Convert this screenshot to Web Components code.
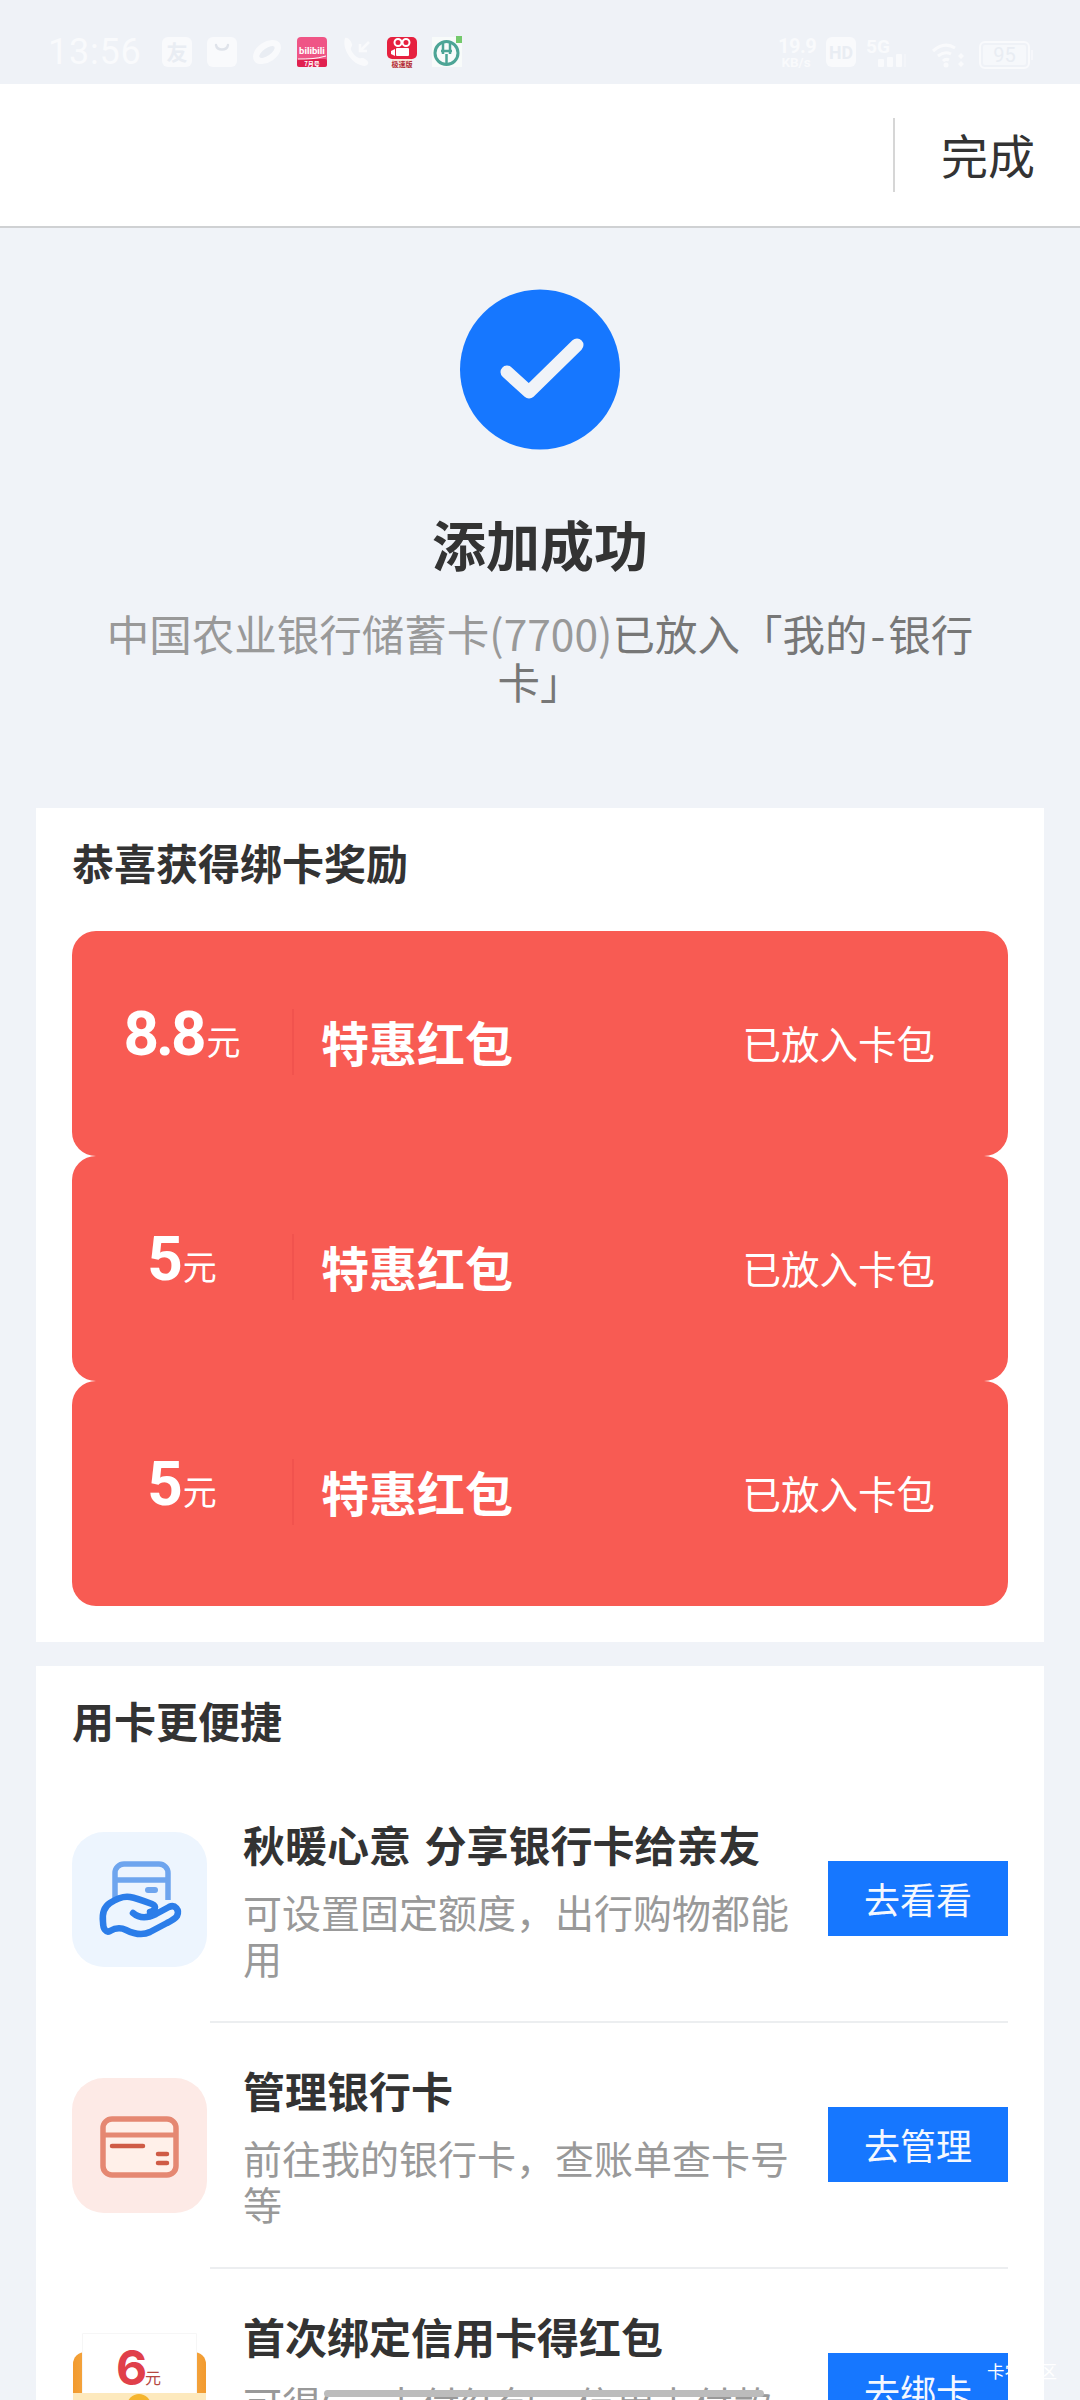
<!DOCTYPE html>
<html><head><meta charset="utf-8">
<style>
html,body{margin:0;padding:0}
body{width:1080px;height:2400px;overflow:hidden;background:#f0f3f8;font-family:"Noto Sans CJK SC","Noto Sans",sans-serif;color:#333}
</style></head><body>
<app-page></app-page>
<script>
function def(name,css,html){
  customElements.define(name,class extends HTMLElement{
    constructor(){super();const r=this.attachShadow({mode:'open'});r.innerHTML='<style>'+css+'</style>'+(typeof html==='function'?html(this):html);}
  });
}
def('status-bar',`:host{display:flex;height:84px;box-sizing:border-box;background:#eff2f7;align-items:center;padding:20px 47px 0 48px;color:#f9fafc;font-family:Roboto,sans-serif}
.t{font-size:36px;width:92px;letter-spacing:.8px;margin-right:22px;line-height:1;white-space:nowrap}
.ic{display:flex;gap:15px;align-items:center;height:32px}
.ic svg{display:block;width:30px;height:32px}
.r{margin-left:auto;display:flex;align-items:center;height:32px}
.r svg{display:block;flex:none}
.sp{font-size:13.500px;line-height:13px;font-weight:700;text-align:center;width:36px;margin-right:12px;white-space:nowrap}
.sp b{font-size:20px;line-height:20px;display:block;font-weight:700;letter-spacing:-.5px}
`,`<span class="t">13:56</span><div class="ic">
<svg viewBox="0 0 30 32"><rect x="0" y="1" width="30" height="30" rx="6" fill="#f9fafc"/><text x="15" y="24" text-anchor="middle" font-size="21" font-weight="700" font-family="Noto Sans CJK SC" fill="#e9edf3">友</text></svg>
<svg viewBox="0 0 30 32"><rect x="0" y="1" width="30" height="30" rx="6" fill="#f9fafc"/><path d="M9 9c1 6 11 6 12 0" stroke="#dfe3ea" stroke-width="2.4" fill="none" stroke-linecap="round"/></svg>
<svg viewBox="0 0 30 32"><g transform="rotate(-35 15 16)"><ellipse cx="15" cy="16" rx="15.5" ry="10" fill="#f9fafc"/><ellipse cx="15" cy="16" rx="9" ry="3.600" fill="#e9edf3"/></g></svg>
<svg viewBox="0 0 30 32"><rect y="1" width="30" height="30" rx="4" fill="#ef5586"/><rect y="23" width="30" height="8" rx="2" fill="#e0204f"/><path d="M1 23c10 0 18 0 28-3" stroke="#fff" stroke-width="1" fill="none"/><text x="15" y="18" text-anchor="middle" font-size="9.500" font-weight="700" font-family="Roboto" fill="#fff">bilibili</text><text x="15" y="30" text-anchor="middle" font-size="6" font-weight="700" font-family="Noto Sans CJK SC" fill="#fff">7&#x6708;&#x53f7;</text></svg>
<svg viewBox="0 0 30 32"><path d="M3 2c3-1 6 3 7 6 1 2-2 3-1 6 2 4 5 7 8 8 2 1 4-1 6 1 2 1 4 3 3 5-2 3-6 2-10 0C8 24 0 12 3 2z" fill="#f9fafc"/><path d="M27 6L19 14M18 8v7h7" stroke="#f9fafc" stroke-width="2.500" fill="none"/></svg>
<svg viewBox="0 0 30 32"><rect y="1" width="30" height="22" rx="5" fill="#e6213f"/><rect x="5" y="23" width="20" height="9" fill="#f8e6d8"/><circle cx="11" cy="6.500" r="3.500" fill="none" stroke="#fff" stroke-width="2"/><circle cx="19" cy="6.500" r="3.500" fill="none" stroke="#fff" stroke-width="2"/><rect x="9" y="12" width="13" height="8" rx="1" fill="#fff"/><path d="M8 13l-4 2v3l4 2z" fill="#fff"/><text x="15" y="31" text-anchor="middle" font-size="7" font-weight="700" font-family="Noto Sans CJK SC" fill="#b02a3a">&#x6781;&#x901f;&#x7248;</text></svg>
<svg viewBox="0 0 30 32"><rect y="1" width="30" height="30" fill="#f8fbfa"/><circle cx="14.500" cy="17" r="11.500" fill="none" stroke="#4da596" stroke-width="3"/><path d="M11 6v12M18 6v12M9 15h11M14.500 18v11" stroke="#4da596" stroke-width="2.500"/><path d="M24 0h6v7h-6z" fill="#74c96c"/></svg>
</div><div class="r">
<div class="sp"><b>19.9</b>KB/s</div>
<svg width="30" height="32" viewBox="0 0 30 32"><rect y="1" width="30" height="30" rx="6" fill="#f9fafc"/><text x="15" y="23" text-anchor="middle" font-size="19" font-weight="700" font-family="Roboto" fill="#e9edf3" textLength="24" lengthAdjust="spacingAndGlyphs">HD</text></svg>
<svg width="40" height="32" viewBox="0 0 40 32" style="margin-left:10px"><g fill="#f9fafc"><rect x="12" y="23" width="6" height="8" rx="1"/><rect x="21" y="21" width="6" height="10" rx="1"/><rect x="30" y="18" width="6" height="13" rx="1"/><rect x="38" y="18" width="2" height="13" opacity=".4"/></g><text x="0" y="17" font-size="19" font-weight="700" font-family="Roboto" fill="#f9fafc" textLength="24" lengthAdjust="spacingAndGlyphs">5G</text></svg>
<svg width="33" height="26" viewBox="0 0 33 26" style="margin:6px 14px 0 26px"><path d="M1 9c8-7 16-7 22-3M6 14c5-4 9-4 13-2M11 19c2-2 4-2 6-1" fill="none" stroke="#f9fafc" stroke-width="3"/><circle cx="14" cy="23" r="2.500" fill="#f9fafc"/><path d="M29 11l3 3-3 3-3-3zM29 19l3 3-3 3-3-3z" fill="#f9fafc"/></svg>
<svg width="54" height="28" viewBox="0 0 54 28" style="margin-top:6px"><rect x="1" y="1" width="49" height="26" rx="5" fill="none" stroke="#f9fafc" stroke-width="2"/><rect x="4" y="4" width="43" height="20" rx="2" fill="#f6f8fb"/><rect x="52" y="9" width="2" height="10" fill="#f9fafc" opacity=".7"/><text x="25.500" y="21" text-anchor="middle" font-size="20" font-family="Roboto" fill="#e9edf3">95</text></svg>
</div>`);
def('nav-bar',`:host{display:flex;height:144px;box-sizing:border-box;background:#fff;border-bottom:2px solid #cfd1d3;justify-content:flex-end;align-items:center}
.d{width:2px;height:74px;background:#d6d6d6;margin-right:46px;margin-top:-1px}
.t{font-size:47px;line-height:60px;color:#333;margin-right:45px;font-weight:400;margin-top:-2px}`,
`<span class="d"></span><span class="t">完成</span>`);
def('success-head',`:host{display:flex;flex-direction:column;align-items:center;padding:61px 0 0;height:580px;box-sizing:border-box}
svg{display:block;width:160px;height:161px}
h1{margin:63px 0 0;font-size:54px;line-height:62px;font-weight:700;color:#333}
p{margin:34px 0 0;width:880px;text-align:center;font-size:42.500px;line-height:48px;color:#777}
span{color:#999}
i{font-style:normal;margin:0 3px}`,
`<svg viewBox="0 0 160 161"><circle cx="80" cy="80.500" r="80" fill="#1677ff"/><path d="M47 83L69 103 117 56" fill="none" stroke="#f0f3f8" stroke-width="13" stroke-linecap="round" stroke-linejoin="round"/></svg>
<h1>添加成功</h1><p><span>中国农业银行储蓄卡(7700)</span>已放入「我的<i>-</i>银行卡」</p>`);
def('white-card',`:host{display:block;background:#fff;margin:0 36px 24px;padding:26px 36px 36px}
h2{margin:0;font-size:42px;line-height:56px;font-weight:700;color:#333}
.b{display:flex;flex-direction:column}`,
`<h2><slot name="title"></slot></h2><div class="b"><slot></slot></div>`);
def('red-ticket',`:host{display:flex;height:225px;box-sizing:border-box;background:#f85b53;border-radius:24px;color:#fff;align-items:flex-start;padding-top:79px}
.a{width:220px;display:flex;justify-content:center;align-items:baseline;font-weight:700;font-size:62px;letter-spacing:-3px;line-height:62px;height:62px;font-family:Roboto,"Noto Sans CJK SC",sans-serif;margin-top:-7px;flex:none}
.a small{font-size:34px;font-weight:400;letter-spacing:0;font-family:"Noto Sans CJK SC",sans-serif;margin-left:3px}
.d{width:2px;height:66px;background:#f1534e;margin-top:-1px;flex:none}
.n{font-size:48px;font-weight:700;line-height:66px;margin-left:27px;margin-top:-2px}
.s{margin-left:auto;margin-right:73px;font-size:38.500px;line-height:66px;margin-top:-1px}`,
el=>`<div class="a">${el.getAttribute('amount')}<small>元</small></div><div class="d"></div><div class="n">特惠红包</div><div class="s">已放入卡包</div>`);
def('action-row',`:host{display:flex;position:relative;height:246px;box-sizing:border-box;flex:none}
.i{width:135px;height:135px;flex:none;margin-top:55px;border-radius:32px;overflow:hidden}
::slotted(svg){display:block;width:135px;height:135px}
.m{margin-left:36px;width:560px;flex:none;padding-top:39px}
.t{font-size:42px;line-height:56px;font-weight:700;color:#333;white-space:nowrap;word-spacing:4px}
.s{font-size:39px;line-height:46px;color:#999;margin-top:16px}
.btn{position:absolute;right:0;top:84px;width:180px;height:75px;background:#1677ff;color:#f4f8ff;font-size:36px;line-height:75px;text-align:center}
.l{position:absolute;left:138px;right:0;bottom:0;height:2px;background:#eceef0}`,
el=>`<div class="i"><slot name="icon"></slot></div><div class="m"><div class="t">${el.getAttribute('t')}</div><div class="s">${el.getAttribute('s')}</div></div><div class="btn">${el.getAttribute('b')}</div><div class="l"></div>`);
def('home-bar',`:host{position:absolute;left:324px;top:2390px;width:440px;height:7px;background:#bcbcbc;border-radius:4px}`,``);
def('app-page',`:host{display:block;position:relative;width:1080px;height:2400px;overflow:hidden}
.wm{position:absolute;left:987px;top:2358px;font-size:17.500px;color:#fff;white-space:nowrap}`,
`<status-bar></status-bar><nav-bar></nav-bar><success-head></success-head>
<white-card style="height:834px;box-sizing:border-box"><span slot="title">恭喜获得绑卡奖励</span>
<div style="height:41px"></div>
<red-ticket amount="8.8"></red-ticket><red-ticket amount="5"></red-ticket><red-ticket amount="5"></red-ticket></white-card>
<white-card><span slot="title">用卡更便捷</span>
<div style="height:29px"></div>
<action-row t="秋暖心意 分享银行卡给亲友" s="可设置固定额度，出行购物都能用" b="去看看"><svg slot="icon" viewBox="0 0 135 135"><rect width="135" height="135" fill="#edf5fe"/><path d="M43 67V41a9 9 0 0 1 9-9h35a9 9 0 0 1 9 9v27M43 48h53" fill="none" stroke="#6ea5ee" stroke-width="5.500"/><rect x="73" y="55" width="13" height="6" rx="3" fill="#6ea5ee"/><path d="M61 81C68 87 76 86 84 82L97 75C103 72 108 78 105 84C103 87 99 89 95 91L78 100C70 104 62 102 54 98C48 95 43 96 38 99C34 101 31 97 31 90C30 82 32 75 38 71C44 67 52 64 58 65C64 66 72 69 80 72C85 74 83 79 78 80" fill="none" stroke="#2b7de9" stroke-width="6.500" stroke-linejoin="round" stroke-linecap="round"/></svg></action-row>
<action-row t="管理银行卡" s="前往我的银行卡，查账单查卡号等" b="去管理"><svg slot="icon" viewBox="0 0 135 135"><rect width="135" height="135" fill="#fdeae6"/><rect x="31" y="41" width="73" height="56" rx="9" fill="#fff0e9" stroke="#e58872" stroke-width="5.500"/><path d="M31 57h73" stroke="#e58872" stroke-width="5"/><path d="M40 68h31" stroke="#cf5b45" stroke-width="4.500" stroke-linecap="round"/><path d="M86 76h9M86 85h9" stroke="#cf5b45" stroke-width="4.500" stroke-linecap="round"/></svg></action-row>
<action-row t="首次绑定信用卡得红包" s="可得6元支付红包，信用卡付款" b="去绑卡"><svg slot="icon" viewBox="0 0 135 135"><defs><linearGradient id="og" x1="0" x2="1" y1="0" y2="0"><stop offset="0" stop-color="#f29a2e"/><stop offset=".5" stop-color="#fbd38a"/><stop offset="1" stop-color="#f29a2e"/></linearGradient></defs><rect width="135" height="135" fill="#fff"/><rect x="1" y="28" width="133" height="107" rx="12" fill="url(#og)"/><path d="M10.500 9.500h114v62h-114z" fill="#fff" stroke="#f6f6f6"/><text x="44" y="61" font-size="48" font-weight="700" font-family="Inter,sans-serif" fill="#e0404a">6</text><text x="73" y="60" font-size="16" font-family="Noto Sans CJK SC,sans-serif" fill="#b5473f">元</text><rect x="1" y="69" width="133" height="8" fill="#fde9bd"/><circle cx="67" cy="82" r="12" fill="#f5b52e"/></svg></action-row>
</white-card>
<home-bar></home-bar>
<div class="wm">卡农社区</div>`);
</script></body></html>
